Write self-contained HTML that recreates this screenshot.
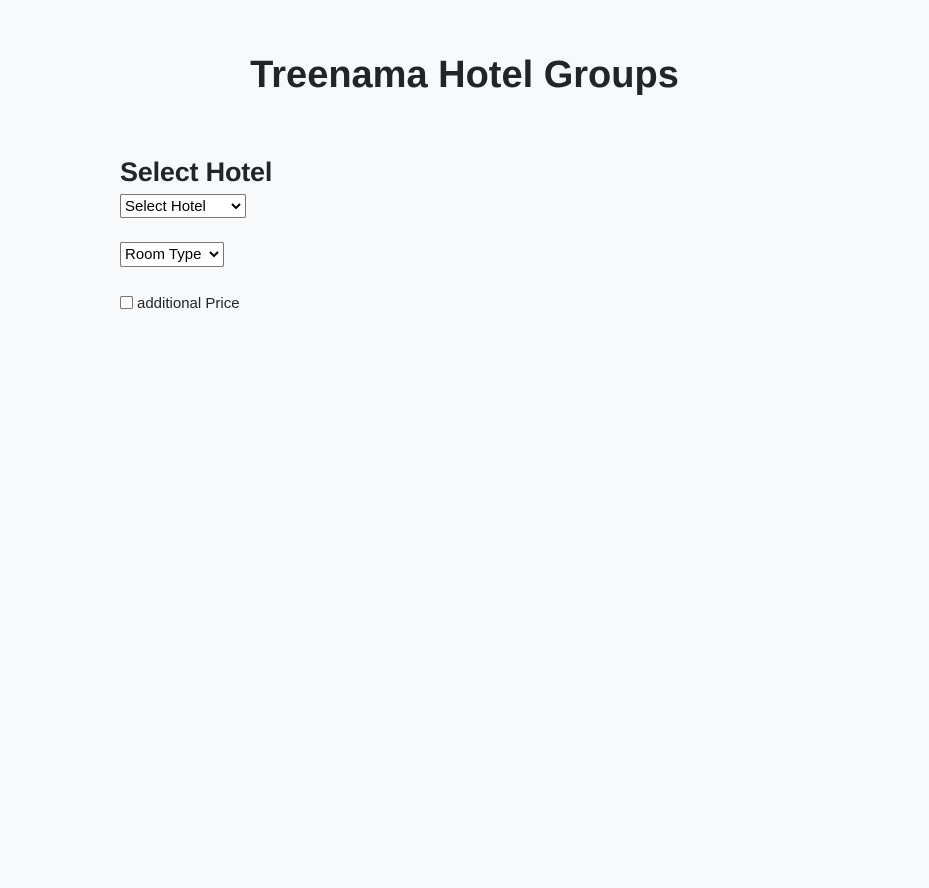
<!DOCTYPE html>
<html><head><meta charset="utf-8"><style>
body{margin:0;background:#f8f9fa;color:#212529;font-family:"Liberation Sans",sans-serif;width:929px;height:888px;overflow:hidden;position:relative}
.t{position:absolute;left:0;width:929px;top:51px;text-align:center;font-size:38px;font-weight:bold;line-height:48px;letter-spacing:0}
.h{position:absolute;left:120px;top:155px;font-size:27px;font-weight:bold;line-height:34px;letter-spacing:-0.2px}
.s{position:absolute;left:120px;height:23px;border:1px solid #767676;border-radius:2px;background:#fff;box-sizing:border-box;font-size:15px;line-height:24px;padding-left:4px;color:#000}
.s svg{position:absolute;right:4px;top:8px}
.c{position:absolute;left:120px;top:296px;width:13px;height:13px;border:1px solid #767676;border-radius:2px;box-sizing:border-box;background:#fff}
.l{position:absolute;left:137px;top:295px;font-size:15px;line-height:18px}
</style></head><body>
<div class="t">Treenama Hotel Groups</div>
<div class="h">Select Hotel</div>
<div class="s" style="top:194px;width:126px;height:24px">Select Hotel<svg width="10" height="7" viewBox="0 0 10 7"><path d="M1 1l4 4 4-4" fill="none" stroke="#000" stroke-width="2"/></svg></div>
<div class="s" style="top:242px;width:104px;height:25px">Room Type<svg width="10" height="7" viewBox="0 0 10 7"><path d="M1 1l4 4 4-4" fill="none" stroke="#000" stroke-width="2"/></svg></div>
<div class="c"></div>
<div class="l">additional Price</div>
</body></html>
